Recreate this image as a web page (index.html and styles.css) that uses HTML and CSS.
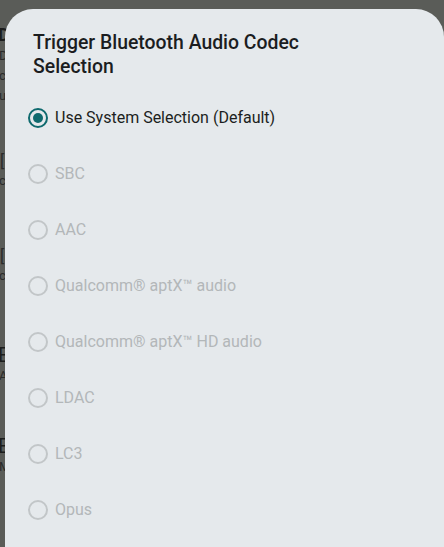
FILE: index.html
```html
<!DOCTYPE html>
<html>
<head>
<meta charset="utf-8">
<link rel="stylesheet" href="styles.css">
</head>
<body>
<div class="page">
  <div class="bg-title">Developer options</div>
  <div class="bg-line">Disable</div>
  <div class="bg-line">connect</div>
  <div class="bg-line">use</div>
  <div class="bg-gap"></div>
  <div class="bg-box">[</div>
  <div class="bg-line">c</div>
  <div class="bg-gap2"></div>
  <div class="bg-box">[</div>
  <div class="bg-line">c</div>
  <div class="bg-gap3"></div>
  <div class="bg-title2">Enable</div>
  <div class="bg-line">Allow</div>
  <div class="bg-gap4"></div>
  <div class="bg-title2">Enable</div>
  <div class="bg-line">Max</div>
</div>

<div class="dialog">
  <h1 class="title">Trigger Bluetooth Audio Codec Selection</h1>
  <ul class="options">
    <li class="option selected"><span class="radio"></span><span class="label">Use System Selection (Default)</span></li>
    <li class="option disabled"><span class="radio"></span><span class="label">SBC</span></li>
    <li class="option disabled"><span class="radio"></span><span class="label">AAC</span></li>
    <li class="option disabled"><span class="radio"></span><span class="label">Qualcomm® aptX™ audio</span></li>
    <li class="option disabled"><span class="radio"></span><span class="label">Qualcomm® aptX™ HD audio</span></li>
    <li class="option disabled"><span class="radio"></span><span class="label">LDAC</span></li>
    <li class="option disabled"><span class="radio"></span><span class="label">LC3</span></li>
    <li class="option disabled"><span class="radio"></span><span class="label">Opus</span></li>
  </ul>
</div>
</body>
</html>
```

FILE: styles.css
```css
html, body {
  margin: 0;
  padding: 0;
}
body {
  width: 444px;
  height: 547px;
  overflow: hidden;
  background: #5a5c58;
  font-family: Roboto, "Noto Sans", sans-serif;
  position: relative;
}
.page {
  padding: 24px 0 0 0;
  color: #1c1d1c;
}
.bg-title {
  font-size: 18px;
  font-weight: 700;
  line-height: 22px;
  margin-left: -2px;
}
.bg-line {
  font-size: 13px;
  line-height: 20px;
  color: #2a2b2a;
  margin-left: -1px;
}
.bg-gap { height: 47px; }
.bg-gap2 { height: 57px; }
.bg-gap3 { height: 58px; }
.bg-gap4 { height: 49px; }
.bg-box {
  font-size: 16px;
  line-height: 18px;
  color: #2a2b2a;
}
.bg-title2 {
  font-size: 20px;
  line-height: 22px;
  margin-left: -2px;
}

.dialog {
  position: absolute;
  left: 5px;
  top: 9px;
  width: 439px;
  height: 538px;
  overflow: hidden;
  background: #e5e9ec;
  border-radius: 28px 28px 0 0;
  box-sizing: border-box;
  padding: 22px 0 0 0;
}
.title {
  margin: 0;
  padding: 0 0 0 28px;
  max-width: 300px;
  font-size: 19.4px;
  font-weight: 500;
  line-height: 24px;
  color: #1b1d1f;
}
.options {
  list-style: none;
  margin: 11px 0 0 0;
  padding: 0;
}
.option {
  height: 56px;
  display: flex;
  align-items: center;
  padding-left: 23px;
}
.radio {
  width: 20px;
  height: 20px;
  box-sizing: border-box;
  border-radius: 50%;
  border: 2px solid #c2c6c8;
  display: flex;
  align-items: center;
  justify-content: center;
  flex: none;
}
.selected .radio {
  border-color: #0f6a6e;
}
.selected .radio::after {
  content: "";
  width: 10px;
  height: 10px;
  border-radius: 50%;
  background: #0f6a6e;
}
.label {
  margin-left: 7px;
  font-size: 16px;
  line-height: 20px;
  color: #1c1f21;
}
.disabled .label {
  color: #b3b7b9;
}
```
